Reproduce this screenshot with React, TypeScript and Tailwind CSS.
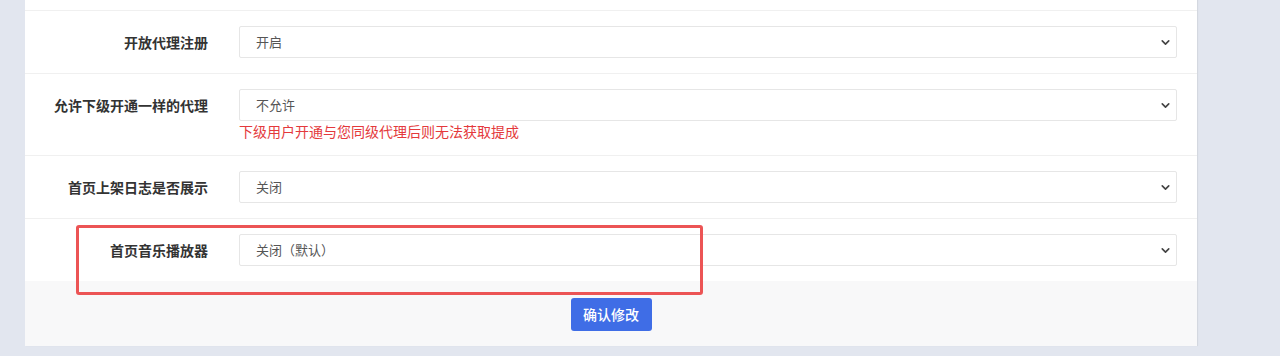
import React from 'react';
import { ChevronDown } from 'lucide-react';

const font = { fontFamily: '"Noto Sans CJK SC", "Liberation Sans", sans-serif' };

interface RowProps {
  label: string;
  value: string;
  hint?: string;
  options: string[];
}

const SettingRow: React.FC<RowProps> = ({ label, value, hint, options }) => (
  <div className="flex items-start border-t border-[#f0f0f0] pt-[15px] pb-[15px]">
    <label className="w-[183px] shrink-0 text-right text-[14px] font-bold text-[#333] leading-[32px]">{label}</label>
    <div className="ml-[31px] w-[938px]">
      <div className="relative">
        <select
          defaultValue={value}
          className="h-[32px] w-full appearance-none rounded-[2px] border border-[#e6e6e6] bg-white pl-[16px] text-[13px] text-[#555] outline-none"
        >
          {options.map(o => (
            <option key={o}>{o}</option>
          ))}
        </select>
        <ChevronDown size={13} strokeWidth={3} className="pointer-events-none absolute right-[5px] top-[10px] text-[#444]" />
      </div>
      {hint && <p className="mt-[1px] text-[14px] leading-[18px] text-[#e4393c]">{hint}</p>}
    </div>
  </div>
);

export default function App() {
  return (
    <div className="min-h-[356px] w-[1280px] bg-[#e2e6ef] pb-[10px] pl-[25px] pr-[83px]" style={font}>
      <div className="relative bg-white shadow-[1px_0_1px_rgba(0,0,0,0.06)]">
        <div className="pt-[10px]">
          <SettingRow label="开放代理注册" value="开启" options={['开启', '关闭']} />
          <SettingRow
            label="允许下级开通一样的代理"
            value="不允许"
            hint="下级用户开通与您同级代理后则无法获取提成"
            options={['不允许', '允许']}
          />
          <SettingRow label="首页上架日志是否展示" value="关闭" options={['关闭', '开启']} />
          <SettingRow label="首页音乐播放器" value="关闭（默认）" options={['关闭（默认）', '开启']} />
        </div>
        <div className="flex justify-center bg-[#f8f8f9] pb-[15px] pt-[17px]">
          <button className="h-[33px] w-[81px] rounded-[3px] bg-[#3f6de6] text-[14px] font-medium text-white">确认修改</button>
        </div>
        <div className="pointer-events-none absolute left-[51px] top-[225px] h-[70px] w-[627px] rounded-[3px] border-[3px] border-[#ec5455]" />
      </div>
    </div>
  );
}
